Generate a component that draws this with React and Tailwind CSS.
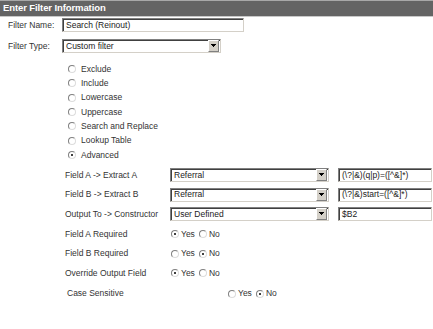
import React from 'react';

const font = { fontFamily: '"Liberation Sans", Arial, sans-serif' };

const Radio = ({ checked }) => (
  <span className="inline-block w-[8px] h-[8px] rounded-full bg-white border border-t-[#808080] border-l-[#808080] border-r-[#dcdcdc] border-b-[#dcdcdc] relative shrink-0">
    {checked && <span className="absolute left-[2px] top-[2px] w-[2px] h-[2px] bg-black rounded-full" />}
  </span>
);

const TextBox = ({ value, className }) => (
  <div className={`h-[14px] bg-white border border-t-[#808080] border-l-[#808080] border-r-[#d4d0c8] border-b-[#d4d0c8] shadow-[inset_1px_1px_0_#404040] flex items-center pl-[3px] text-[8.5px] text-[#222] overflow-hidden whitespace-nowrap ${className}`}>
    {value}
  </div>
);

const Select = ({ value, className }) => (
  <div className={`h-[14px] bg-white border border-t-[#808080] border-l-[#808080] border-r-[#d4d0c8] border-b-[#d4d0c8] shadow-[inset_1px_1px_0_#404040] flex items-center text-[8.5px] text-[#222] ${className}`}>
    <span className="flex-1 pl-[3px] whitespace-nowrap overflow-hidden">{value}</span>
    <span className="w-[11px] h-[12px] mr-[1px] bg-[#d4d0c8] border border-t-white border-l-white border-r-[#808080] border-b-[#808080] flex items-center justify-center">
      <svg width="5" height="4" viewBox="0 0 5 4">
        <rect x="0" y="0" width="5" height="1" fill="#000" />
        <rect x="1" y="1" width="3" height="1" fill="#000" />
        <rect x="2" y="2" width="1" height="1" fill="#000" />
      </svg>
    </span>
  </div>
);

const YesNo = ({ yes }) => (
  <div className="flex items-center text-[8.5px] text-[#333]">
    <Radio checked={yes} />
    <span className="ml-[2px] mr-[4px]">Yes</span>
    <Radio checked={!yes} />
    <span className="ml-[2px]">No</span>
  </div>
);

export default function App() {
  const types = ['Exclude', 'Include', 'Lowercase', 'Uppercase', 'Search and Replace', 'Lookup Table', 'Advanced'];
  const fields = [
    { label: 'Field A -> Extract A', select: 'Referral', input: '(\\?|&)(q|p)=([^&]*)' },
    { label: 'Field B -> Extract B', select: 'Referral', input: '(\\?|&)start=([^&]*)' },
    { label: 'Output To -> Constructor', select: 'User Defined', input: '$B2' },
  ];
  const flags = [
    { label: 'Field A Required', yes: true },
    { label: 'Field B Required', yes: false },
    { label: 'Override Output Field', yes: true },
  ];

  return (
    <div className="w-[433px] h-[329px] bg-white overflow-hidden" style={font}>
      <div className="h-[17px] bg-[#646464] border-t border-t-[#a8a8a8] border-b border-b-[#c8c8c8] flex items-center pl-[3px]">
        <span className="text-white font-bold text-[9.5px] tracking-[-0.1px]">Enter Filter Information</span>
      </div>

      <div className="flex items-center mt-[1px] h-[14px]">
        <span className="w-[62px] pl-[8px] text-[8.5px] text-[#333]">Filter Name:</span>
        <TextBox value="Search (Reinout)" className="w-[182px]" />
      </div>
      <div className="flex items-center mt-[7px] h-[14px]">
        <span className="w-[62px] pl-[8px] text-[8.5px] text-[#333]">Filter Type:</span>
        <Select value="Custom filter" className="w-[159px]" />
      </div>

      <div className="mt-[9px] pl-[68px] flex flex-col">
        {types.map((t) => (
          <div key={t} className="h-[14.3px] flex items-center text-[8.5px] text-[#333]">
            <Radio checked={t === 'Advanced'} />
            <span className="ml-[5px]">{t}</span>
          </div>
        ))}
      </div>

      <div className="mt-[3px] pl-[65px] flex flex-col">
        {fields.map((f) => (
          <div key={f.label} className="h-[19.7px] flex items-center">
            <span className="w-[105px] text-[8.5px] text-[#333]">{f.label}</span>
            <Select value={f.select} className="w-[159px]" />
            <TextBox value={f.input} className="w-[94px] ml-[9px]" />
          </div>
        ))}
        {flags.map((f) => (
          <div key={f.label} className="h-[19.7px] flex items-center">
            <span className="w-[106px] text-[8.5px] text-[#333]">{f.label}</span>
            <YesNo yes={f.yes} />
          </div>
        ))}
        <div className="h-[21px] flex items-center pl-[2px]">
          <span className="w-[161px] text-[8.5px] text-[#333]">Case Sensitive</span>
          <YesNo yes={false} />
        </div>
      </div>
    </div>
  );
}
